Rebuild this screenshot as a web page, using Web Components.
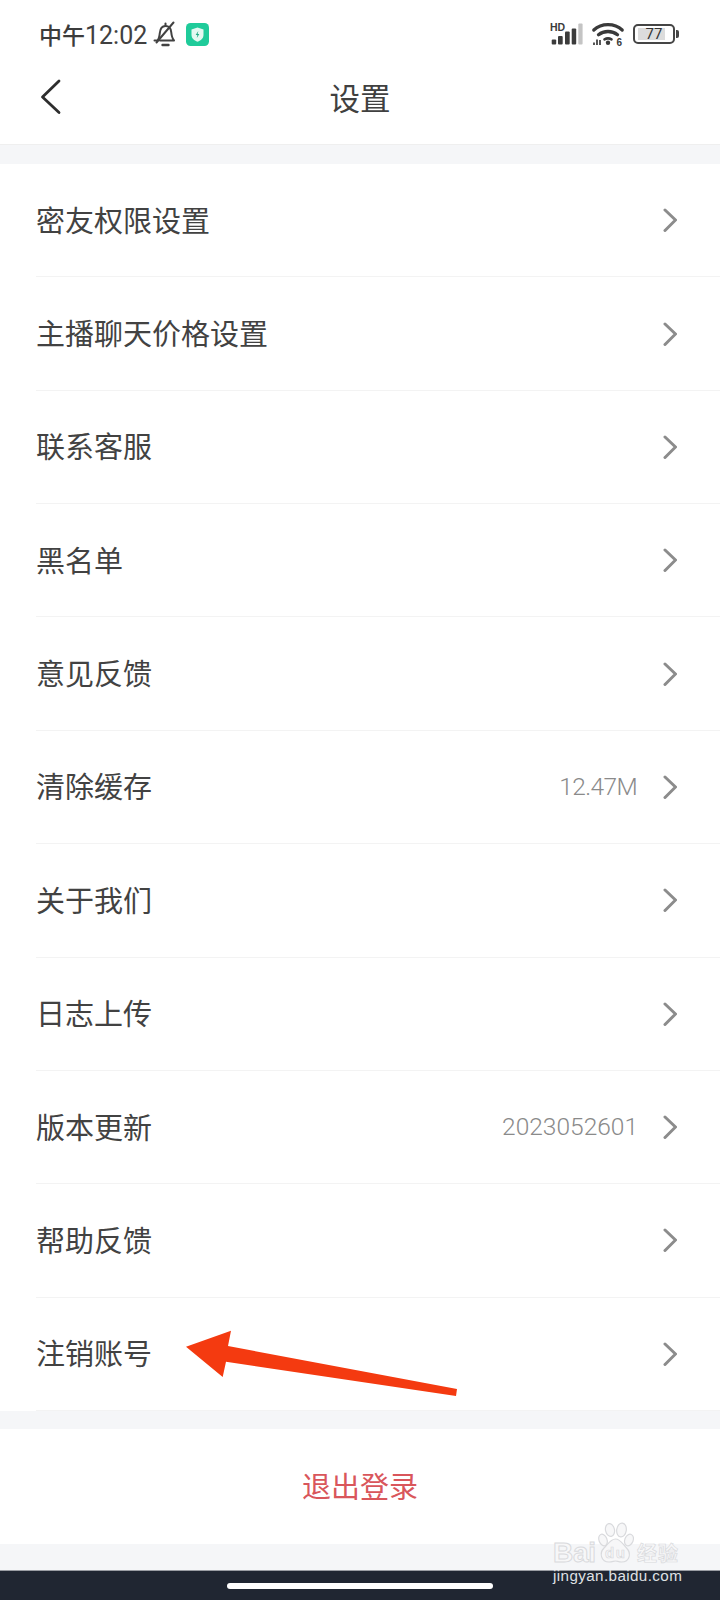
<!DOCTYPE html>
<html lang="zh"><head><meta charset="utf-8">
<style>
html,body{margin:0;padding:0;background:#f5f6f8}
body{width:720px;height:1600px;overflow:hidden;font-family:"Noto Sans CJK SC","Noto Sans",sans-serif}
</style></head><body>
<settings-app>
  <status-bar slot="status"></status-bar>
  <nav-header slot="header">设置</nav-header>
  <settings-group slot="list">
    <setting-row>密友权限设置</setting-row>
    <setting-row>主播聊天价格设置</setting-row>
    <setting-row>联系客服</setting-row>
    <setting-row>黑名单</setting-row>
    <setting-row>意见反馈</setting-row>
    <setting-row value="12.47M" tight>清除缓存</setting-row>
    <setting-row>关于我们</setting-row>
    <setting-row>日志上传</setting-row>
    <setting-row value="2023052601">版本更新</setting-row>
    <setting-row>帮助反馈</setting-row>
    <setting-row last>注销账号</setting-row>
  </settings-group>
  <logout-button slot="logout">退出登录</logout-button>
  <home-bar slot="home"></home-bar>
  <annotation-arrow slot="overlay"></annotation-arrow>
  <baidu-mark slot="overlay"></baidu-mark>
</settings-app>
<script>
function def(name, html){
  customElements.define(name, class extends HTMLElement{
    constructor(){super();this.attachShadow({mode:'open'}).innerHTML=html;}
  });
}
def('settings-app',`<style>
:host{display:flex;flex-direction:column;position:relative;width:720px;height:1600px;background:#f5f6f8}
.gap1{height:19px;flex:none}.gap2{height:18px;flex:none}.gap3{flex:1}
</style>
<slot name="status"></slot><slot name="header"></slot><div class="gap1"></div>
<slot name="list"></slot><div class="gap2"></div><slot name="logout"></slot><div class="gap3"></div>
<slot name="home"></slot><slot name="overlay"></slot>`);

def('status-bar',`<style>
:host{display:flex;align-items:center;height:68px;box-sizing:border-box;padding:0 0 0 39px;background:#fff;color:#3c3c3c}
.t{font:500 23px/26px "Noto Sans CJK SC","Noto Sans",sans-serif}
.l{display:flex;align-items:center}
.num{font:400 25px/26px "Roboto",sans-serif;padding-top:3px;color:#404040}
.bell{margin-left:6px;display:block}.vpn{margin-left:9px;display:block}
.r{margin-left:auto;margin-right:45px;display:flex;align-items:center;gap:9px}
.batt{position:relative;width:42px;height:20px;box-sizing:border-box;border:2px solid #454545;border-radius:5px;display:flex;align-items:center;justify-content:center}
.fill{position:absolute;left:3px;top:2px;bottom:2px;width:27px;background:#dcdcdc}
.batt b{position:relative;font:400 15px/1 "Roboto",sans-serif;color:#333}
.cap{position:absolute;right:-6px;top:4px;width:3px;height:8px;background:#454545;border-radius:0 2px 2px 0}
svg{overflow:visible;display:block}
svg text{font-family:"Liberation Sans",sans-serif}
</style>
<div class="l"><span class="t">中午</span><span class="num">12:02</span>
<svg class="bell" width="24" height="26" viewBox="0 0 24 26" fill="none" stroke="#424242" stroke-width="2" stroke-linejoin="round" stroke-linecap="round">
<path d="M1.500 19.500h3c1.700-2 2-4.500 2.300-7.500.4-4.500 2.500-7 5.700-7 3 0 5.300 2.200 5.700 6 .4 3.700.8 6.200 2.800 8.500H7"/><path d="M20.500 1.500 3.500 21.500"/><path d="M12.500 2.500v2.500"/><path d="M9.500 24h6" stroke-width="2.400"/></svg>
<svg class="vpn" width="23" height="23" viewBox="0 0 23 23"><rect width="23" height="23" rx="4.500" fill="#1fcb9a"/><path d="M11.500 4.500 17.500 6.500v5.200c0 3.500-2.500 5.700-6 7-3.500-1.300-6-3.500-6-7V6.500z" fill="#e4f8f1"/><path d="M12.300 8 9.700 12h1.700l-.6 3 2.500-4h-1.700z" fill="#1fa983"/></svg>
</div>
<div class="r">
<svg width="33" height="24" viewBox="0 0 33 24"><text x="0" y="8.500" font-size="10.500" font-weight="700" fill="#3c3c3c">HD</text>
<rect x="1.700" y="17.500" width="4.500" height="5" rx="1" fill="#3c3c3c"/><rect x="8" y="14" width="4.700" height="8.500" rx="1" fill="#3c3c3c"/><rect x="15" y="9.500" width="4.700" height="13" rx="1" fill="#3c3c3c"/><rect x="21.700" y="6.500" width="4.500" height="16" rx="1" fill="#3c3c3c"/><rect x="28.300" y="1.500" width="4.300" height="21" rx="1" fill="#c4c4c4"/></svg>
<svg width="32" height="24" viewBox="0 0 32 24" fill="none" stroke="#3a3a3a" stroke-width="3.300" stroke-linecap="round"><path d="M1.800 8C9.500 .8 22.500 .8 30.200 8"/><path d="M6.500 12.800c5.300-4.400 13.700-4.400 19 0"/><path d="M12.500 17.300c2.200-1.200 4.800-1.200 7 0" stroke-width="2.600"/><circle cx="16" cy="20.800" r="2.200" fill="#3a3a3a" stroke="none"/><text x="24.500" y="23.500" font-size="10" font-weight="700" fill="#3a3a3a" stroke="none">6</text><path d="M2 23v-2.500M5 23v-5.500M8 23v-5" stroke-width="1.700" stroke-linecap="butt"/></svg>
<div class="batt"><div class="fill"></div><b>77</b><div class="cap"></div></div>
</div>`);

def('nav-header',`<style>
:host{display:flex;align-items:center;justify-content:center;position:relative;height:76px;background:#fff;border-bottom:1px solid #efefef;font:400 30.500px/1 "Noto Sans CJK SC",sans-serif;color:#404040}
.b{position:absolute;left:40px;top:11px}
.s{margin-top:-18px}
</style>
<svg class="b" width="22" height="36" viewBox="0 0 22 36" fill="none" stroke="#2e2e2e" stroke-width="2.800" stroke-linecap="round" stroke-linejoin="round"><path d="M19 2 2.500 18 19 33.500"/></svg>
<span class="s"><slot></slot></span>`);

def('settings-group',`<style>:host{display:block;background:#fff}</style><slot></slot>`);

customElements.define('setting-row',class extends HTMLElement{
  constructor(){super();
    const v=this.getAttribute('value');
    this.attachShadow({mode:'open'}).innerHTML=`<style>
:host{display:block;background:#fff;padding-left:36px;height:113.360px;box-sizing:border-box}
.i{display:flex;align-items:center;height:100%;box-sizing:border-box;padding-right:43px;border-bottom:1px solid #f3f3f3}
.t{font:400 29px/1 "Noto Sans CJK SC",sans-serif;color:#424242;flex:1;margin-top:-2px}
.v{font:300 24.500px/1 "Roboto",sans-serif;color:#8a8a8a;margin-right:25px}
:host([tight]) .v{letter-spacing:-.6px;margin-right:26px}
svg{display:block}
</style><div class="i"><span class="t"><slot></slot></span>${v?`<span class="v">${v}</span>`:''}
<svg width="14" height="24" viewBox="0 0 14 24" fill="none" stroke="#8c8c8c" stroke-width="3" stroke-linecap="round" stroke-linejoin="round"><path d="M2 2l10.500 10L2 22.500"/></svg></div>`;
  }
});

def('logout-button',`<style>
:host{display:flex;align-items:center;justify-content:center;height:115px;background:#fff;font:400 29px/1 "Noto Sans CJK SC",sans-serif;color:#d9565b}
span{margin-top:-2px}
</style><span><slot></slot></span>`);

def('home-bar',`<style>
:host{display:flex;align-items:center;justify-content:center;height:30px;flex:none;background:#202632;border-top:1px solid #9a9da3;box-sizing:border-box}
div{width:266px;height:6px;border-radius:3px;background:#fff}
</style><div></div>`);

def('annotation-arrow',`<style>
:host{display:block;position:absolute;left:186px;top:1330px;width:272px;height:70px}
svg{display:block}
</style><svg width="272" height="70" viewBox="0 0 272 70"><path d="M0 16.700 45 .7 42 16 271 59 270 66 40 31.700 36.700 47z" fill="#f43a10"/></svg>`);

def('baidu-mark',`<style>
:host{display:block;position:absolute;left:550px;top:1520px;width:170px;height:80px}
svg{display:block;position:absolute;left:0;top:0;overflow:visible}
.a{font:700 28px "Liberation Sans",sans-serif;fill:#f7f7f8;stroke:#d9dadd;stroke-width:1}
.c{font:700 20px "Noto Sans CJK SC",sans-serif;fill:#f7f7f8;stroke:#d9dadd;stroke-width:.7}
.d{font:700 15px "Liberation Sans",sans-serif;fill:#f7f7f8;stroke:#d9dadd;stroke-width:.7}
.u{position:absolute;left:3px;top:48px;font:400 15.200px/1 "Liberation Sans",sans-serif;letter-spacing:.4px;color:#dfe0e4;white-space:nowrap}
</style><svg width="170" height="50" viewBox="0 0 170 50">
<g fill="#f7f7f8" stroke="#d9dadd" stroke-width="1.200">
<ellipse cx="60" cy="10" rx="4.500" ry="6.500" transform="rotate(-12 60 10)"/>
<ellipse cx="71.500" cy="10" rx="4.800" ry="7" transform="rotate(8 71.500 10)"/>
<ellipse cx="53" cy="20" rx="4" ry="6" transform="rotate(-22 53 20)"/>
<ellipse cx="79" cy="20" rx="4.200" ry="6" transform="rotate(22 79 20)"/>
<path d="M65.500 19c5 0 7 5 11 9 5 5 3.500 14-5 14-3 0-4-1-6-1s-3 1-6.500 1c-8 0-10-9-5-14 4-4 6.500-9 11.500-9z"/></g>
<text class="a" x="3" y="42" textLength="43">Bai</text>
<text class="d" x="55" y="38" textLength="20">du</text>
<text class="c" x="87" y="41" textLength="41">经验</text></svg>
<div class="u">jingyan.baidu.com</div>`);
</script>
</body></html>
